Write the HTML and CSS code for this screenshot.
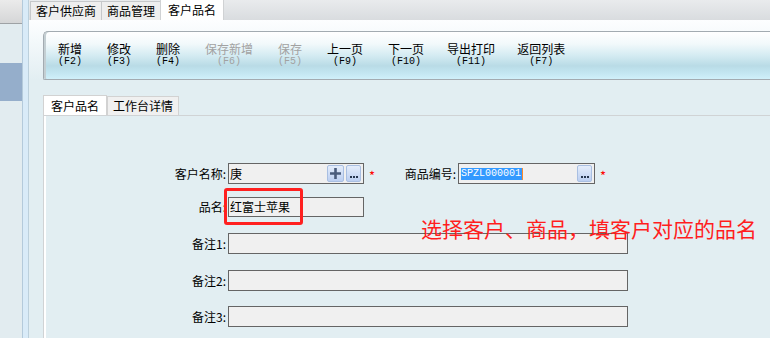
FILE: index.html
```html
<!DOCTYPE html>
<html lang="zh-CN">
<head>
  <meta charset="UTF-8">
  <title>客户品名</title>
  <link rel="stylesheet" href="styles.css">
</head>
<body>
  <div class="sidebar">
    <div class="side-head"></div>
    <div class="side-item"></div>
  </div>
  <div class="splitter"></div>
  <div class="main">
    <div class="tabstrip">
      <div class="tab">客户供应商</div>
      <div class="tab">商品管理</div>
      <div class="tab active">客户品名</div>
    </div>
    <div class="page">
      <div class="toolbar">
        <div class="tbtn">新增<span>(F2)</span></div>
        <div class="tbtn">修改<span>(F3)</span></div>
        <div class="tbtn">删除<span>(F4)</span></div>
        <div class="tbtn off">保存新增<span>(F6)</span></div>
        <div class="tbtn off">保存<span>(F5)</span></div>
        <div class="tbtn">上一页<span>(F9)</span></div>
        <div class="tbtn">下一页<span>(F10)</span></div>
        <div class="tbtn print">导出打印<span>(F11)</span></div>
        <div class="tbtn back">返回列表<span>(F7)</span></div>
      </div>
      <div class="subtabs">
        <div class="subtab active">客户品名</div>
        <div class="subtab">工作台详情</div>
      </div>
      <div class="panel">
        <div class="form">
          <div class="row first">
            <label class="lbl">客户名称:</label>
            <div class="field short">
              <span class="val">庚</span>
              <span class="ibtn plus"><svg width="11" height="11" viewBox="0 0 11 11"><path d="M5.5 0v11M0 5.5h11" stroke="#4a5c7c" stroke-width="2.6"/></svg></span>
              <span class="ibtn dots"><i></i><i></i><i></i></span>
            </div>
            <span class="req">*</span>
            <label class="lbl lbl2">商品编号:</label>
            <div class="field short wide">
              <span class="val"><span class="sel">SPZL000001</span><span class="caret"></span></span>
              <span class="ibtn dots"><i></i><i></i><i></i></span>
            </div>
            <span class="req">*</span>
          </div>
          <div class="row name">
            <label class="lbl">品名:</label>
            <div class="field short"><span class="val">红富士苹果</span></div>
          </div>
          <div class="row memo">
            <label class="lbl">备注1:</label>
            <div class="field long"></div>
          </div>
          <div class="row memo">
            <label class="lbl">备注2:</label>
            <div class="field long"></div>
          </div>
          <div class="row memo last">
            <label class="lbl">备注3:</label>
            <div class="field long"></div>
          </div>
        </div>
        <div class="mark"></div>
        <div class="note">选择客户、商品，填客户对应的品名</div>
      </div>
    </div>
  </div>
</body>
</html>
```

FILE: styles.css
```css
html, body { height: 100%; }
body { margin: 0; display: flex; overflow: hidden; font-family: "Noto Sans CJK SC", "Liberation Sans", sans-serif; font-size: 12px; color: #000; background: #e2eef2; }

.sidebar { width: 22px; background: #e2ecf0; flex: none; }
.side-head { height: 23px; border-bottom: 1px solid #9ea2a5; background: linear-gradient(#ebebeb, #d5d6d7); }
.side-item { margin-top: 39px; height: 38px; background: #95aecb; }
.splitter { width: 5px; flex: none; background: #d9ebf8; border-left: 1px solid #b4cadb; border-right: 1px solid #bcd0dc; }

.main { flex: 1; display: flex; flex-direction: column; min-width: 0; }
.tabstrip { height: 20px; display: flex; align-items: flex-end; padding-left: 1px; background: linear-gradient(#e9ebed, #d9dcdf); }
.tab { height: 18px; line-height: 18px; padding: 0 5px; background: #eeeeee; border: 1px solid #c6c8ca; border-bottom: none; margin-right: -1px; white-space: nowrap; }
.tab.active { height: 20px; line-height: 20px; padding: 0 7px; background: #fff; border-color: #d0d2d4; }

.page { flex: 1; padding: 11px 0 0 14px; background: linear-gradient(#fdfeff 0, #f4f9fb 20px, #e2eef2 60px); display: flex; flex-direction: column; }
.toolbar { height: 47px; display: flex; gap: 25px; align-items: center; padding-left: 14px; border: 1px solid #a3abb1; border-right: none; border-top-left-radius: 5px; border-bottom-left-radius: 2px; background: linear-gradient(#ffffff 0, #f2f9fb 25%, #d4ebf2 50%, #b9dbe6 72%, #c4e7f2 88%, #d0f0fa 100%); box-shadow: inset 2px 0 0 #c4cfd3; }
.tbtn { display: flex; flex-direction: column; align-items: center; line-height: 12px; padding-bottom: 1px; white-space: nowrap; }
.tbtn span { font-family: "Liberation Mono", monospace; font-size: 10px; line-height: 12px; margin-top: 1px; }
.tbtn.off { color: #a2a2a2; }
.tbtn.print { margin-left: -2px; }
.tbtn.back { margin-left: -3px; }

.subtabs { display: flex; align-items: flex-end; margin-top: 15px; height: 20px; }
.subtab { height: 18px; line-height: 18px; padding: 0 5px; background: #f0f0f0; border: 1px solid #d2d2d2; border-bottom: none; }
.subtab.active { height: 20px; line-height: 20px; padding: 0 7px; background: #fff; position: relative; top: 1px; }

.panel { flex: 1; position: relative; border-top: 1px solid #d0d3d5; border-left: 1px solid #d0d3d5; box-shadow: inset 2px 0 0 #fff; background: #e2eef2; }
.form { padding: 47px 0 0 106px; display: flex; flex-direction: column; }
.row { display: flex; align-items: center; }
.row.name { margin-top: 13px; }
.row.memo { margin-top: 16px; }
.row.memo.last { margin-top: 15px; }
.lbl { width: 76px; text-align: right; margin-right: 2px; line-height: 14px; white-space: nowrap; }
.lbl2 { width: 79px; }
.field { height: 21px; box-sizing: border-box; border: 1px solid #656565; background: #f0f0f0; display: flex; align-items: center; padding: 0 2px 0 1px; gap: 2px; }
.row.name .field { height: 20px; }
.field.short { width: 136px; }
.field.wide { width: 137px; }
.field.long { width: 400px; }
.val { flex: 1; display: flex; align-items: center; line-height: 14px; white-space: nowrap; }
.sel { font-family: "Liberation Mono", monospace; font-size: 10px; line-height: 12px; color: #fff; background: #3399ff; padding: 0 1px 0 0; margin-left: 1px; }
.caret { width: 1px; height: 12px; background: #ff8a2a; }
.ibtn { width: 14px; height: 15px; border: 1px solid #a9bfe2; border-radius: 2px; background: linear-gradient(#e4edfb, #bccff1); display: flex; align-items: center; justify-content: center; }
.ibtn.dots { align-items: flex-end; gap: 1px; padding-bottom: 3px; box-sizing: border-box; height: 17px; width: 15px; }
.ibtn.plus { width: 15px; }
.ibtn.dots i { width: 2px; height: 2px; background: #26364f; }
.req { color: #ff0000; font-size: 13px; line-height: 13px; width: 8px; margin-left: 5px; padding-top: 3px; }

.mark { position: absolute; left: 180px; top: 72px; width: 73px; height: 31px; border: 3px solid #ff2020; border-radius: 3px; }
.note { position: absolute; left: 377px; top: 101px; font-size: 21px; line-height: 22px; color: #ff1e1e; white-space: nowrap; }
```
